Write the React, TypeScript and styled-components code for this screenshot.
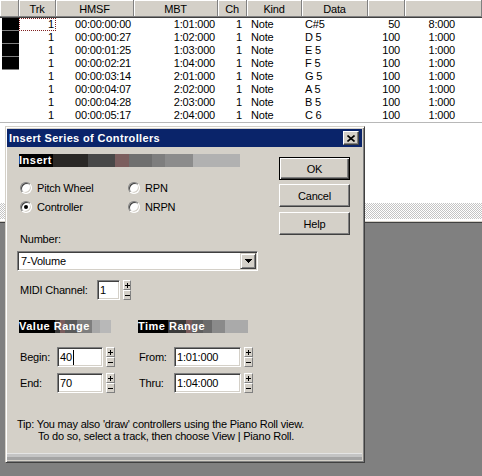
import React from 'react';
import styled, { createGlobalStyle } from 'styled-components';

const Global = createGlobalStyle`
  html, body { margin: 0; padding: 0; }
  body {
    width: 482px; height: 476px; overflow: hidden; background: #808080;
    font-family: "Liberation Sans", Arial, sans-serif; font-size: 11px;
    letter-spacing: -0.2px; color: #000;
  }
  #root { width: 482px; height: 476px; }
`;

const COLS = '19px 37px 78px 84px 29px 55px 66px 37px 55px 1fr';

const Screen = styled.div`
  position: relative; width: 482px; height: 476px;
  display: flex; flex-direction: column; background: #808080;
`;

const ListPane = styled.div`
  height: 203px; background: #fff; display: flex; flex-direction: column;
`;

const Header = styled.div`
  display: grid; grid-template-columns: ${COLS};
  height: 16px; box-sizing: content-box;
  background: #d4d0c8; border-bottom: 1px solid #808080;
  box-shadow: 0 1px 0 #404040; margin-bottom: 1px;
`;

const HeaderCell = styled.div<{ $span?: number }>`
  grid-column: span ${p => p.$span ?? 1};
  box-sizing: border-box; height: 16px; padding-top: 3px; line-height: 12px;
  text-align: center; white-space: nowrap; overflow: hidden;
  border-right: 1px solid #808080;
  box-shadow: inset 1px 1px 0 #fff;
`;

const Rows = styled.div`
  display: flex; flex-direction: column; border-bottom: 1px solid #b8b8b8;
`;

const Row = styled.div`
  display: grid; grid-template-columns: ${COLS}; height: 13px;
`;

const Cell = styled.div<{ $align: 'left' | 'right'; $pad: number; $focus?: boolean }>`
  box-sizing: border-box; height: 13px; line-height: 13px; white-space: pre;
  text-align: ${p => p.$align};
  ${p => (p.$align === 'left' ? `padding-left: ${p.$pad}px;` : `padding-right: ${p.$pad}px;`)}
  ${p => (p.$focus ? 'outline: 1px dotted #802020; outline-offset: -1px;' : '')}
`;

const Marker = styled.div<{ $on: boolean }>`
  margin-left: 2px; height: 13px; box-sizing: border-box;
  background: ${p => (p.$on ? '#000' : 'transparent')};
  border-bottom: 1px solid ${p => (p.$on ? '#808080' : 'transparent')};
`;

const Dither = styled.div`
  height: 16px; background-color: #fff;
  background-image: repeating-conic-gradient(#c4c4c4 0 25%, #fff 0 50%);
  background-size: 2px 2px;
`;

const Edge = styled.div`
  height: 1px; background: #d4d0c8;
  border-top: 2px solid #fff; border-bottom: 1px solid #404040;
`;

/* ---------- dialog ---------- */

const Dialog = styled.div`
  position: absolute; left: 5px; top: 126px; width: 360px; box-sizing: border-box;
  background: #d4d0c8;
  border: 1px solid; border-color: #d4d0c8 #404040 #404040 #d4d0c8;
  box-shadow: inset 1px 1px 0 #fff, inset -1px -1px 0 #808080;
  padding: 2px 2px 2px 1px;
  display: flex; flex-direction: column;
`;

const TitleBar = styled.div`
  height: 18px; background: #0a246a; display: flex; align-items: center;
  padding: 0 3px 0 2px;
`;

const TitleText = styled.div`
  color: #fff; font-weight: bold; font-size: 11px; letter-spacing: 0.35px;
`;

const CloseBtn = styled.div`
  margin-left: auto; width: 16px; height: 14px; box-sizing: border-box;
  background: #d4d0c8;
  border: 1px solid; border-color: #fff #404040 #404040 #fff;
  box-shadow: inset -1px -1px 0 #808080;
  display: flex; align-items: center; justify-content: center;
`;

const Body = styled.div`
  display: flex; flex-direction: column; padding: 7px 12px 11px 10px;
`;

const Main = styled.div`
  display: flex;
`;

const LeftCol = styled.div`
  width: 241px; display: flex; flex-direction: column;
`;

const ButtonCol = styled.div`
  margin-left: auto; padding-top: 3px; display: flex; flex-direction: column;
`;

const PushButton = styled.div<{ $default?: boolean; $mt: number }>`
  width: 71px; height: 23px; box-sizing: border-box; margin-top: ${p => p.$mt}px;
  display: flex; align-items: center; justify-content: center;
  background: #d4d0c8;
  ${p =>
    p.$default
      ? `border: 1px solid #000; box-shadow: inset 1px 1px 0 #fff, inset -1px -1px 0 #404040, inset -2px -2px 0 #808080;`
      : `border: 1px solid; border-color: #fff #404040 #404040 #fff; box-shadow: inset -1px -1px 0 #808080;`}
`;

const SectionBar = styled.div<{ $w: number; $bg: string }>`
  width: ${p => p.$w}px; height: 13px; background: ${p => p.$bg};
  color: #fff; font-weight: bold; font-size: 11px; letter-spacing: 0.5px;
  line-height: 13px; white-space: nowrap; padding-left: 0;
`;

const RadioGrid = styled.div`
  display: grid; grid-template-columns: 108px auto; grid-auto-rows: 19px;
  margin: 11px 0 0 3px;
`;

const RadioItem = styled.div`
  display: flex; align-items: center; gap: 5px;
`;

const RadioCircle = styled.span<{ $on?: boolean }>`
  position: relative; flex: none;
  width: 12px; height: 12px; box-sizing: border-box; border-radius: 50%;
  border: 1px solid; border-color: #808080 #fff #fff #808080;
  background: #fff;
  box-shadow: inset 1px 1px 0 #404040, inset -1px -1px 0 #d4d0c8;
  &::after {
    content: ''; display: ${p => (p.$on ? 'block' : 'none')};
    position: absolute; left: 3px; top: 3px; width: 4px; height: 4px;
    border-radius: 50%; background: #000;
  }
`;

const FieldLabel = styled.div`
  margin: 17px 0 0 3px; line-height: 13px;
`;

const Combo = styled.div`
  margin-top: 5px; width: 241px; height: 20px; box-sizing: border-box;
  background: #fff;
  border: 1px solid; border-color: #808080 #fff #fff #808080;
  box-shadow: inset 1px 1px 0 #404040, inset -1px -1px 0 #d4d0c8;
  padding: 1px; display: flex; align-items: center;
`;

const ComboText = styled.div`
  padding-left: 2px;
`;

const ComboButton = styled.div`
  margin-left: auto; width: 16px; height: 16px; box-sizing: border-box;
  background: #d4d0c8;
  border: 1px solid; border-color: #d4d0c8 #404040 #404040 #d4d0c8;
  box-shadow: inset 1px 1px 0 #fff, inset -1px -1px 0 #808080;
  display: flex; align-items: center; justify-content: center;
`;

const ChannelRow = styled.div`
  margin: 9px 0 0 3px; display: flex; align-items: center; height: 20px;
`;

const ChannelLabel = styled.div`
  width: 77px;
`;

const EditBox = styled.div<{ $w: number }>`
  width: ${p => p.$w}px; height: 20px; box-sizing: border-box;
  background: #fff;
  border: 1px solid; border-color: #808080 #fff #fff #808080;
  box-shadow: inset 1px 1px 0 #404040, inset -1px -1px 0 #d4d0c8;
  padding-left: 2px; display: flex; align-items: center; white-space: nowrap;
`;

const Caret = styled.span`
  display: inline-block; width: 1px; height: 15px; background: #000; margin-left: 1px;
`;

const SpinWrap = styled.div<{ $w: number }>`
  margin-left: 3px; width: ${p => p.$w}px; height: 20px;
  display: flex; flex-direction: column;
`;

const SpinHalf = styled.div`
  flex: 1; box-sizing: border-box; background: #d4d0c8;
  border: 1px solid; border-color: #fff #808080 #808080 #fff;
  display: flex; align-items: center; justify-content: center;
`;

const RangeGrid = styled.div`
  margin: 20px 0 0 2px; display: grid; grid-template-columns: 119px auto;
`;

const Field = styled.div<{ $mt: number }>`
  margin-top: ${p => p.$mt}px; display: flex; align-items: center; height: 20px;
`;

const FieldName = styled.div<{ $w: number }>`
  width: ${p => p.$w}px; box-sizing: border-box; padding-left: 1px;
`;

const Tip = styled.div`
  margin-top: 25px; line-height: 12px; white-space: nowrap;
`;

const TipLine = styled.div<{ $indent: number }>`
  padding-left: ${p => p.$indent}px;
`;

const BottomBand = styled.div`
  height: 7px; box-sizing: border-box;
  background: linear-gradient(#e4e4e4 0 1px, #c4c4c4 1px 4px, #a4a4a4 4px 7px);
`;

/* ---------- helpers ---------- */

type Stop = [string, number];
const grad = (stops: Stop[]) => {
  let prev = 0;
  const parts = stops.map(([c, end]) => {
    const s = `${c} ${prev}% ${end}%`;
    prev = end;
    return s;
  });
  return `linear-gradient(to right, ${parts.join(', ')})`;
};

const insertStops: Stop[] = [
  ['#000', 15.4], ['#2a2826', 31], ['#484848', 43.4], ['#7b5e5e', 49.8],
  ['#6f6f6f', 60.2], ['#7e7e7e', 66], ['#8c8c8c', 78.7], ['#b1b1b1', 100],
];
const valueStops: Stop[] = [
  ['#000', 39], ['#3a3a3a', 45], ['#7a5c5c', 50], ['#5a5a5a', 63],
  ['#7e7e7e', 79], ['#a8a8a8', 88], ['#b8b8b8', 100],
];
const timeStops: Stop[] = [
  ['#000', 27], ['#3a3a3a', 44], ['#7a5c5c', 49], ['#5e5e5e', 59],
  ['#6c6c6c', 67], ['#8a8a8a', 79], ['#aaaaaa', 100],
];

const Plus = () => (
  <svg width="5" height="5" viewBox="0 0 5 5" shapeRendering="crispEdges">
    <rect x="0" y="2" width="5" height="1" fill="#000" />
    <rect x="2" y="0" width="1" height="5" fill="#000" />
  </svg>
);
const Minus = () => (
  <svg width="5" height="5" viewBox="0 0 5 5" shapeRendering="crispEdges">
    <rect x="0" y="2" width="5" height="1" fill="#000" />
  </svg>
);

const Spin = ({ w }: { w: number }) => (
  <SpinWrap $w={w}>
    <SpinHalf><Plus /></SpinHalf>
    <SpinHalf><Minus /></SpinHalf>
  </SpinWrap>
);

const events = [
  ['00:00:00:00', '1:01:000', 'C#5', '50', '8:000'],
  ['00:00:00:27', '1:02:000', 'D 5', '100', '1:000'],
  ['00:00:01:25', '1:03:000', 'E 5', '100', '1:000'],
  ['00:00:02:21', '1:04:000', 'F 5', '100', '1:000'],
  ['00:00:03:14', '2:01:000', 'G 5', '100', '1:000'],
  ['00:00:04:07', '2:02:000', 'A 5', '100', '1:000'],
  ['00:00:04:28', '2:03:000', 'B 5', '100', '1:000'],
  ['00:00:05:17', '2:04:000', 'C 6', '100', '1:000'],
];

export default function App() {
  return (
    <>
      <Global />
      <Screen>
        <ListPane>
          <Header>
            <HeaderCell />
            <HeaderCell>Trk</HeaderCell>
            <HeaderCell>HMSF</HeaderCell>
            <HeaderCell>MBT</HeaderCell>
            <HeaderCell>Ch</HeaderCell>
            <HeaderCell>Kind</HeaderCell>
            <HeaderCell>Data</HeaderCell>
            <HeaderCell />
            <HeaderCell $span={2} />
          </Header>
          <Rows>
            {events.map(([hmsf, mbt, data, vel, dur], i) => (
              <Row key={i}>
                <Marker $on={i < 4} />
                <Cell $align="right" $pad={2} $focus={i === 0}>1</Cell>
                <Cell $align="right" $pad={3}>{hmsf}</Cell>
                <Cell $align="right" $pad={3}>{mbt}</Cell>
                <Cell $align="right" $pad={5}>1</Cell>
                <Cell $align="left" $pad={4}>Note</Cell>
                <Cell $align="left" $pad={3}>{data}</Cell>
                <Cell $align="right" $pad={5}>{vel}</Cell>
                <Cell $align="right" $pad={5}>{dur}</Cell>
                <Cell $align="left" $pad={0} />
              </Row>
            ))}
          </Rows>
        </ListPane>
        <Dither />
        <Edge />

        <Dialog>
          <TitleBar>
            <TitleText>Insert Series of Controllers</TitleText>
            <CloseBtn>
              <svg width="8" height="7" viewBox="0 0 8 7">
                <path d="M0.5 0.5L7.5 6.5M7.5 0.5L0.5 6.5" stroke="#000" strokeWidth="1.6" />
              </svg>
            </CloseBtn>
          </TitleBar>
          <Body>
            <Main>
              <LeftCol>
                <SectionBar $w={221} $bg={grad(insertStops)} style={{ marginLeft: 2 }}>Insert</SectionBar>
                <RadioGrid>
                  <RadioItem><RadioCircle />Pitch Wheel</RadioItem>
                  <RadioItem><RadioCircle />RPN</RadioItem>
                  <RadioItem><RadioCircle $on />Controller</RadioItem>
                  <RadioItem><RadioCircle />NRPN</RadioItem>
                </RadioGrid>
                <FieldLabel>Number:</FieldLabel>
                <Combo>
                  <ComboText>7-Volume</ComboText>
                  <ComboButton>
                    <svg width="7" height="4" viewBox="0 0 7 4" shapeRendering="crispEdges">
                      <path d="M0 0H7L3.5 4Z" fill="#000" />
                    </svg>
                  </ComboButton>
                </Combo>
                <ChannelRow>
                  <ChannelLabel>MIDI Channel:</ChannelLabel>
                  <EditBox $w={23}>1</EditBox>
                  <Spin w={8} />
                </ChannelRow>
                <RangeGrid>
                  <SectionBar $w={92} $bg={grad(valueStops)}>Value Range</SectionBar>
                  <SectionBar $w={110} $bg={grad(timeStops)}>Time Range</SectionBar>
                  <Field $mt={14}>
                    <FieldName $w={38}>Begin:</FieldName>
                    <EditBox $w={46}>40<Caret /></EditBox>
                    <Spin w={9} />
                  </Field>
                  <Field $mt={14}>
                    <FieldName $w={36}>From:</FieldName>
                    <EditBox $w={67}>1:01:000</EditBox>
                    <Spin w={9} />
                  </Field>
                  <Field $mt={6}>
                    <FieldName $w={38}>End:</FieldName>
                    <EditBox $w={46}>70</EditBox>
                    <Spin w={9} />
                  </Field>
                  <Field $mt={6}>
                    <FieldName $w={36}>Thru:</FieldName>
                    <EditBox $w={67}>1:04:000</EditBox>
                    <Spin w={9} />
                  </Field>
                </RangeGrid>
              </LeftCol>
              <ButtonCol>
                <PushButton $default $mt={0}>OK</PushButton>
                <PushButton $mt={4}>Cancel</PushButton>
                <PushButton $mt={5}>Help</PushButton>
              </ButtonCol>
            </Main>
            <Tip>
              <TipLine $indent={0}>Tip: You may also 'draw' controllers using the Piano Roll view.</TipLine>
              <TipLine $indent={21}>To do so, select a track, then choose View | Piano Roll.</TipLine>
            </Tip>
          </Body>
          <BottomBand />
        </Dialog>
      </Screen>
    </>
  );
}
